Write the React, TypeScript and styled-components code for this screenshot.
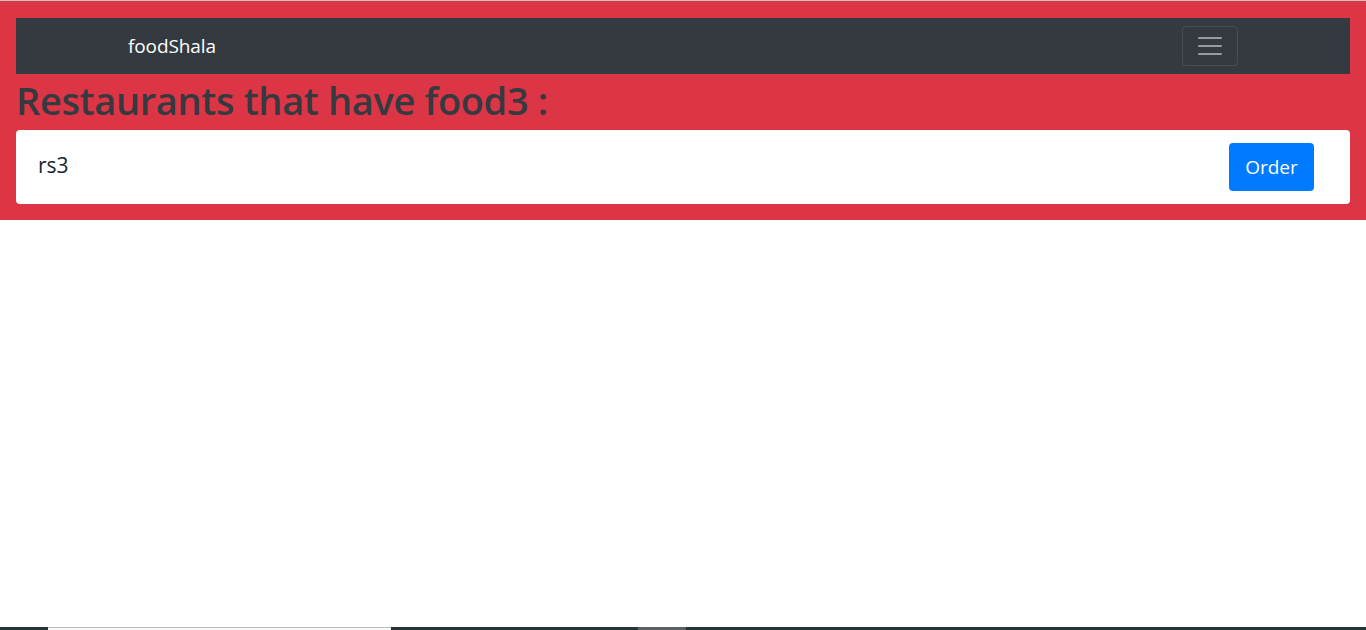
import React from "react";
import styled, { createGlobalStyle } from "styled-components";

const Global = createGlobalStyle`
  html, body { margin: 0; padding: 0; background: #fff; }
  body { font-family: "Open Sans", "Noto Sans", sans-serif; color: #212529; }
  * { box-sizing: border-box; }
`;

const Page = styled.div`
  min-height: 630px;
  display: flex;
  flex-direction: column;
  border-top: 1px solid #c4c4c4;
`;

const Hero = styled.div`
  background: #dc3545;
  padding: 17px 16px 16px;
`;

const Navbar = styled.nav`
  background: #343a40;
  height: 56px;
  display: flex;
  align-items: center;
  justify-content: space-between;
  padding: 0 112px;
`;

const Brand = styled.a`
  color: #fff;
  font-size: 19px;
  letter-spacing: -0.1px;
  text-decoration: none;
  line-height: 1;
`;

const Toggler = styled.button`
  width: 56px;
  height: 40px;
  background: transparent;
  border: 1px solid rgba(255, 255, 255, 0.1);
  border-radius: 4px;
  display: flex;
  align-items: center;
  justify-content: center;
  padding: 0;
`;

const Title = styled.h1`
  margin: 4px 0 8px 0;
  font-size: 38px;
  font-weight: 600;
  color: #343a40;
  line-height: 44px;
  letter-spacing: -0.35px;
`;

const Card = styled.div`
  background: #fff;
  border-radius: 4px;
  height: 74px;
  display: flex;
  align-items: center;
  justify-content: space-between;
  padding: 0 36px 0 22px;
`;

const Name = styled.span`
  font-size: 21px;
  color: #212529;
  margin-top: -4px;
`;

const OrderButton = styled.button`
  background: #007bff;
  color: #fff;
  border: none;
  border-radius: 4px;
  height: 48px;
  width: 85px;
  font-family: inherit;
  font-size: 19px;
  padding: 0;
`;

const Strip = styled.div`
  margin-top: auto;
  height: 3px;
  background: #263338;
  display: flex;
`;

const Segment = styled.div<{ $left: number; $width: number; $color: string; $line?: boolean }>`
  margin-left: ${(p) => p.$left}px;
  width: ${(p) => p.$width}px;
  background: ${(p) => p.$color};
  border-top: ${(p) => (p.$line ? "1px solid #bdbdbd" : "none")};
`;

export default function App() {
  return (
    <>
      <Global />
      <Page>
        <Hero>
          <Navbar>
            <Brand href="#">foodShala</Brand>
            <Toggler aria-label="Toggle navigation">
              <svg width="30" height="30" viewBox="0 0 30 30">
                <path
                  d="M4 7h22M4 15h22M4 23h22"
                  stroke="rgba(255,255,255,0.5)"
                  strokeWidth="2"
                  strokeLinecap="round"
                />
              </svg>
            </Toggler>
          </Navbar>
          <Title>Restaurants that have food3 :</Title>
          <Card>
            <Name>rs3</Name>
            <OrderButton>Order</OrderButton>
          </Card>
        </Hero>
        <Strip>
          <Segment $left={48} $width={343} $color="#fafafa" $line />
          <Segment $left={247} $width={48} $color="#5b6062" />
        </Strip>
      </Page>
    </>
  );
}
